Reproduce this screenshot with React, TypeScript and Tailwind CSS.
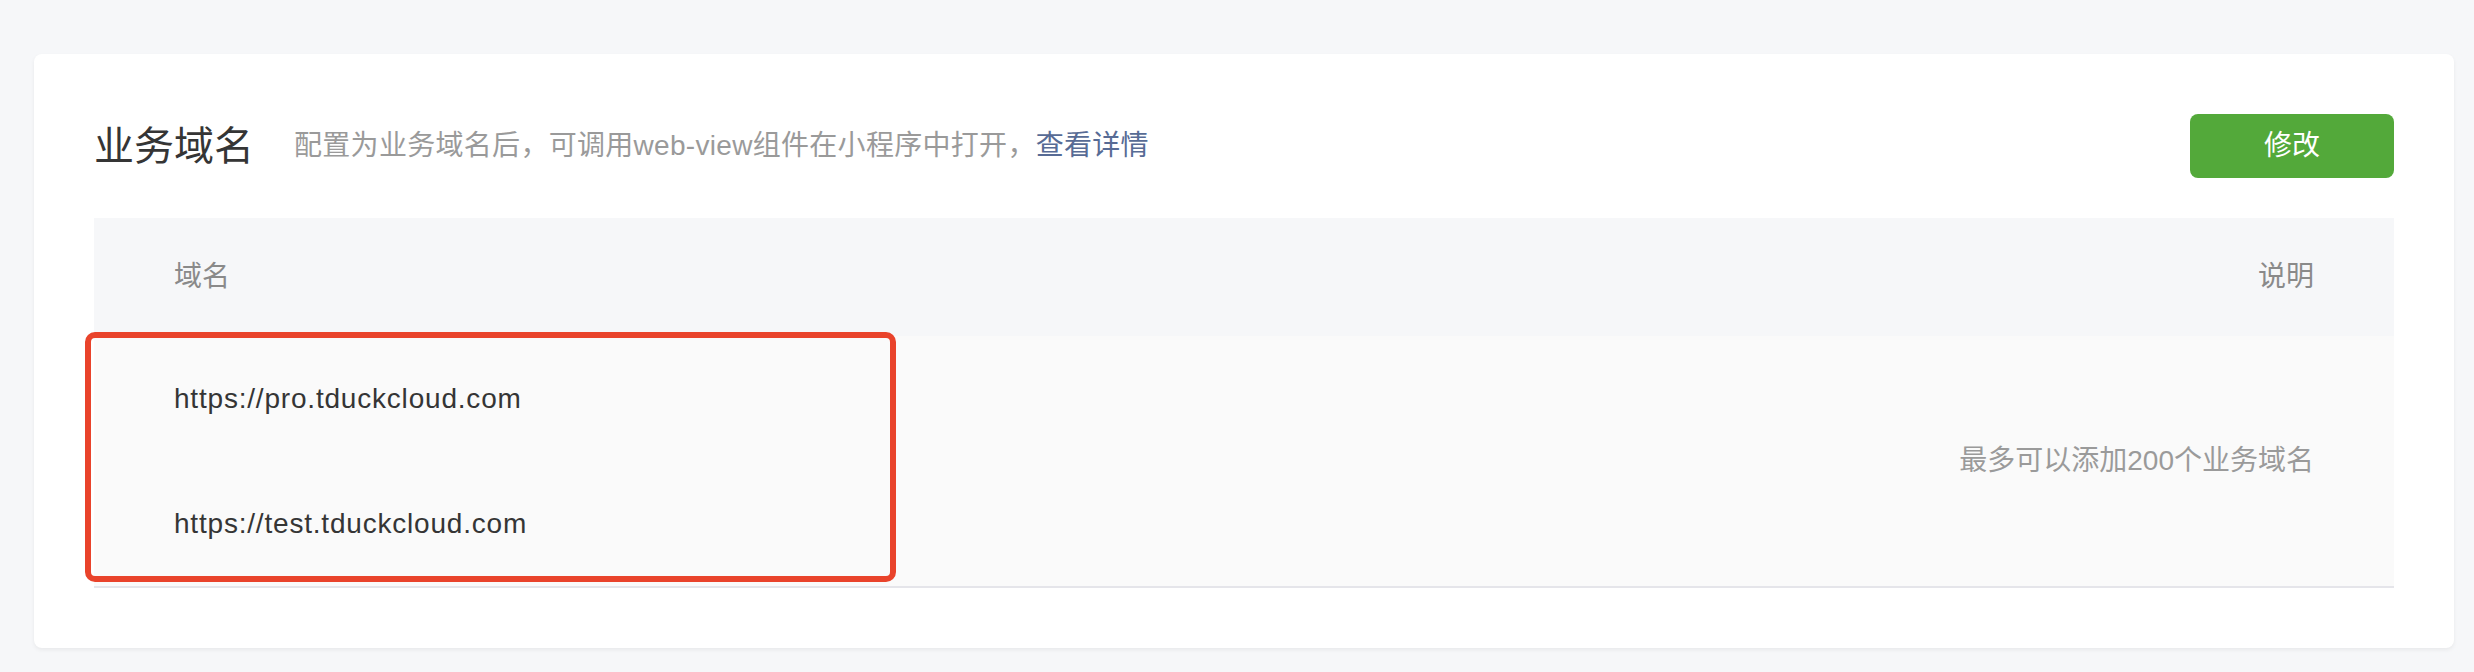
const domains = ['https://pro.tduckcloud.com', 'https://test.tduckcloud.com'];

export default function App() {
  return (
    <div
      className="h-[672px] w-full bg-[#f6f7f9] pt-[54px] pl-[34px]"
      style={{ fontFamily: '"Liberation Sans", "Noto Sans CJK SC", sans-serif' }}
    >
      <div className="w-[2420px] rounded-lg bg-white p-[60px] shadow-[0_2px_4px_rgba(0,0,0,0.06)]">
        {/* title row */}
        <div className="flex h-[64px] items-center justify-between">
          <div className="flex items-center">
            <h2 className="text-[40px] leading-none font-normal text-[#353535]">业务域名</h2>
            <p className="ml-[40px] text-[28px] leading-none tracking-[0.3px] text-[#9a9a9a]">
              配置为业务域名后，可调用web-view组件在小程序中打开，
              <a className="text-[#576b95] cursor-pointer">查看详情</a>
            </p>
          </div>
          <button className="h-[64px] w-[204px] rounded-lg bg-[#53a93a] text-[28px] text-white">
            修改
          </button>
        </div>

        {/* domain table */}
        <div className="mt-[40px]">
          <div className="flex h-[118px] items-center justify-between bg-[#f6f7f9] px-[80px] text-[28px] text-[#8a8a8a]">
            <span>域名</span>
            <span>说明</span>
          </div>
          <div className="relative flex border-b-2 border-[#e5e5ea] bg-[#fafafa]">
            <div className="flex-1">
              {domains.map((d) => (
                <div
                  key={d}
                  className="flex h-[125px] items-center px-[80px] text-[28px] tracking-[0.8px] text-[#353535]"
                >
                  {d}
                </div>
              ))}
            </div>
            <div className="flex items-center pr-[80px] text-[28px] text-[#9a9a9a]">
              最多可以添加200个业务域名
            </div>
            {/* annotation box */}
            <div className="pointer-events-none absolute top-[-4px] left-[-9px] h-[250px] w-[811px] rounded-[10px] border-[6px] border-[#e9432b]" />
          </div>
        </div>
      </div>
    </div>
  );
}
